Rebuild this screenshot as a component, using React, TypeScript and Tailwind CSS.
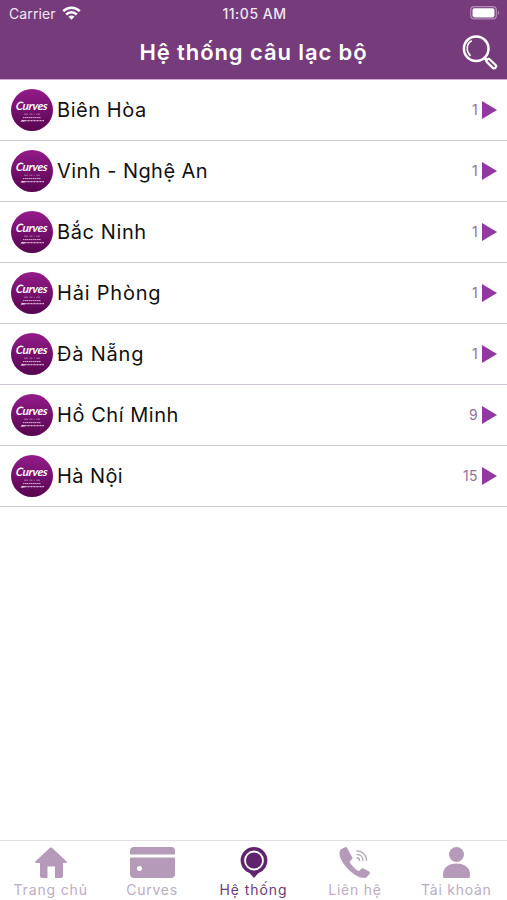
import type { ReactNode } from "react"

const clubs = [
  { name: "Biên Hòa", count: 1, tracking: "tracking-[0.55px]" },
  { name: "Vinh - Nghệ An", count: 1, tracking: "tracking-[0.45px]" },
  { name: "Bắc Ninh", count: 1, tracking: "tracking-[0.6px]" },
  { name: "Hải Phòng", count: 1, tracking: "tracking-[0.8px]" },
  { name: "Đà Nẵng", count: 1, tracking: "tracking-[0.8px]" },
  { name: "Hồ Chí Minh", count: 9, tracking: "tracking-[0.55px]" },
  { name: "Hà Nội", count: 15, tracking: "tracking-[0.4px]" },
]

function StatusBar() {
  return (
    <div className="grid h-[27px] grid-cols-3 items-center pl-[9px] pr-[7px] text-[#f1e6f2]">
      <div className="flex items-center gap-[6px]">
        <span className="text-[14px] leading-none tracking-[0.1px]">Carrier</span>
        <svg className="-mt-0.5" width="19" height="14" viewBox="0 0 19 14" fill="none" stroke="#fff" strokeWidth="2.6">
          <path d="M1.2 5.2a11.8 11.8 0 0 1 16.6 0" />
          <path d="M4.2 8.5a7.5 7.5 0 0 1 10.6 0" />
          <path d="M9.5 13.8 6.5 10.8a4.2 4.2 0 0 1 6 0Z" fill="#fff" stroke="none" />
        </svg>
      </div>
      <span className="text-center text-[14px] font-medium leading-none tracking-[0.5px]">11:05 AM</span>
      <svg className="-mt-0.5 justify-self-end" width="30" height="14" viewBox="0 0 30 14">
        <rect x="0.7" y="0.7" width="25.6" height="12.2" rx="3.4" fill="none" stroke="#b48cb9" strokeWidth="1.2" />
        <rect x="2.5" y="2.2" width="22" height="9.2" rx="1.8" fill="#fff" />
        <path d="M27.8 4.6c1.6.7 1.6 3.7 0 4.4Z" fill="#b48cb9" />
      </svg>
    </div>
  )
}

function SearchIcon() {
  return (
    <svg className="-ml-px -mt-0.5" width="36" height="36" viewBox="0 0 36 36" fill="none" stroke="#fff">
      <circle cx="14.2" cy="14.7" r="12.3" strokeWidth="2.5" />
      <path d="M8.2 21.3C3.8 17.2 4.5 9.5 9.3 7" strokeWidth="1.6" strokeLinecap="round" />
      <path d="m22.8 24 2.2 2.2" strokeWidth="3" />
      <path d="M24.5 27.6c-.8-1 1.7-3.4 2.8-2.6l6.5 6.3c1.3 1.5-1.3 4-2.8 2.8Z" strokeWidth="2.2" strokeLinejoin="round" />
    </svg>
  )
}

function ClubLogo() {
  return (
    <div className="flex h-[42px] w-[42px] shrink-0 flex-col items-center rounded-full bg-linear-to-b from-[#941b8b] to-[#580650] pt-[11px] text-white">
      <span className="-skew-x-6 font-['Lato',sans-serif] text-[11.5px] font-bold italic leading-[12px] -tracking-[0.3px]">
        Curves
      </span>
      <svg className="mt-px" width="26" height="10" viewBox="0 0 26 10" fill="none" stroke="#d8add6">
        <path d="M5 1.2h4m1.5 0h3m1.3 0h1m1.5 0H21" strokeWidth=".6" />
        <path d="M4 4.600h18" strokeDasharray="1.3 .4 2 .3" strokeWidth="1" />
        <path d="M6 7.600h19" strokeDasharray="1.5 .4 .8 .3" strokeWidth="1.200" />
        <path d="m1.500 8.600 2-2v1l2.200-.5v1.500Z" fill="#fff" stroke="none" />
      </svg>
    </div>
  )
}

function Tab({ label, active, tracking, children }: { label: string; active?: boolean; tracking: string; children: ReactNode }) {
  return (
    <div className={`flex flex-1 flex-col items-center ${active ? "text-[#6d3b78]" : "text-[#bdacc3]"}`}>
      <div className="flex h-[37px] items-end">{children}</div>
      <span className={`mt-[3px] whitespace-nowrap text-[14px] leading-[18px] ${tracking}`}>{label}</span>
    </div>
  )
}

export default function App() {
  return (
    <div className="flex h-[900px] w-[507px] flex-col overflow-hidden bg-white font-['Inter',sans-serif]">
      <header className="h-20 shrink-0 border-b border-[#cda9d3] bg-[#753b7b]">
        <StatusBar />
        <div className="grid h-[52px] grid-cols-[44px_1fr_44px] items-center">
          <h1 className="col-start-2 -mt-0.5 text-center text-[22px] font-semibold leading-none tracking-[0.9px] text-white">
            Hệ thống câu lạc bộ
          </h1>
          <SearchIcon />
        </div>
      </header>

      <ul className="flex-1">
        {clubs.map((club) => (
          <li key={club.name} className="flex h-[61px] items-center border-b border-[#cfc4d1] pl-[11px] pr-[10px] pb-px">
            <ClubLogo />
            <span className={`ml-1 flex-1 whitespace-nowrap text-[20px] leading-none text-[#111] ${club.tracking}`}>
              {club.name}
            </span>
            <span className="mr-[4px] text-[14px] leading-none tracking-[0.4px] text-[#96709c]">{club.count}</span>
            <svg width="15" height="18" viewBox="0 0 15 18" fill="#9338a3">
              <path d="M0 0v18l15-9Z" />
            </svg>
          </li>
        ))}
      </ul>

      <nav className="flex h-[60px] shrink-0 border-t border-[#e4e1e5]">
        <Tab label="Trang chủ" tracking="tracking-[0.85px]">
          <svg width="32" height="31" viewBox="0 0 32 31" fill="#b59bb9">
            <path d="M15 .8q1-.8 2 0l14.4 13.400q1.200 1.700-.8 1.800H28v13q0 2-2 2h-6V19.500h-7.500V31H7q-2 0-2-2V16H1.400Q-.6 15.900.6 14.200Z" />
          </svg>
        </Tab>
        <Tab label="Curves" tracking="tracking-[0.75px]">
          <svg width="45" height="31" viewBox="0 0 45 31" fill="#b59bb9">
            <path d="M0 7.500V4q0-4 4-4h37q4 0 4 4v3.500Z" />
            <path fillRule="evenodd" d="M0 10.500h45V27q0 4-4 4H4q-4 0-4-4Zm9.500 8.500a2.500 2.500 0 1 0 0 5 2.500 2.500 0 0 0 0-5Z" />
          </svg>
        </Tab>
        <Tab label="Hệ thống" active tracking="tracking-[0.95px]">
          <svg width="28" height="31" viewBox="0 0 28 31" fill="#60246e">
            <path d="M14 0a13.500 13.500 0 0 1 4.200 26.300L14 31l-4.200-4.700A13.500 13.500 0 0 1 14 0Z" />
            <circle cx="14" cy="13.500" r="9" stroke="#fff" strokeWidth="1.800" />
          </svg>
        </Tab>
        <Tab label="Liên hệ" tracking="tracking-[0.75px]">
          <svg width="32" height="31" viewBox="0 0 32 31" fill="#b59bb9">
            <path d="M6 .2 2 2.300C-.3 4.500.2 9 2.500 13.200c3.300 6.200 8.700 12 15.500 15.700 3.700 2 7.700 2.700 10 1l2.700-3.300q.8-1.200-.5-2.200l-5.700-3q-1.500-.7-2.500.5l-2 2c-1.400.8-9.300-6.700-9.300-9.300L13 12.300q.9-1 .2-2L8 .7Q7.200-.3 6 .2Z" />
            <g fill="none" stroke="#b3a8b6" strokeWidth="1.300" strokeLinecap="round">
              <path d="M18 4c5.500 0 9.500 4 9.500 9.500M18 7.500c3.500 0 6 2.500 6 6M18 11c1.500 0 2.600 1 2.600 2.500" />
            </g>
          </svg>
        </Tab>
        <Tab label="Tài khoản" tracking="tracking-[0.75px]">
          <svg width="27" height="31" viewBox="0 0 27 31" fill="#b59bb9">
            <circle cx="13.500" cy="7.500" r="7.500" />
            <path d="M0 29.500v-2C0 20.500 5.500 16.500 13.500 16.500S27 20.500 27 27.500v2Q27 31 25.500 31h-24Q0 31 0 29.500Z" />
          </svg>
        </Tab>
      </nav>
    </div>
  )
}
